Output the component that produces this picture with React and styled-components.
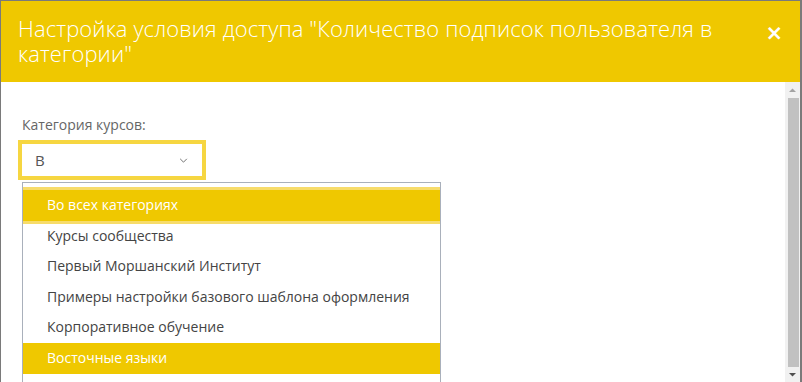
import React from "react";
import styled, { createGlobalStyle } from "styled-components";

const categories = [
  "Во всех категориях",
  "Курсы сообщества",
  "Первый Моршанский Институт",
  "Примеры настройки базового шаблона оформления",
  "Корпоративное обучение",
  "Восточные языки",
];

export default function App() {
  return (
    <>
      <GlobalStyle />
      <Page>
        <Modal>
          <Header>
            <Title>
              Настройка условия доступа "Количество подписок пользователя в
              категории"
            </Title>
            <Close>×</Close>
          </Header>
          <Body>
            <Content>
              <Label>Категория курсов:</Label>
              <Select>
                <SelectValue>В</SelectValue>
                <Chevron viewBox="0 0 10 6" width="9" height="5">
                  <path d="M1 1l4 4 4-4" fill="none" stroke="#666" strokeWidth="1.1" />
                </Chevron>
              </Select>
              <Dropdown>
                {categories.map((c, i) => (
                  <Option key={c} $active={i === 0 || i === 5} $focus={i === 0}>
                    {c}
                  </Option>
                ))}
                <Spacer />
              </Dropdown>
            </Content>
            <ScrollBar>
              <ScrollArrow viewBox="0 0 15 15">
                <polygon points="4,9 11,9 7.5,5.5" fill="#a3a3a3" />
              </ScrollArrow>
              <Thumb />
              <ScrollArrow viewBox="0 0 15 15">
                <polygon points="4,6 11,6 7.5,9.5" fill="#505050" />
              </ScrollArrow>
            </ScrollBar>
          </Body>
        </Modal>
      </Page>
    </>
  );
}

const GlobalStyle = createGlobalStyle`
  html, body {
    margin: 0;
    padding: 0;
    background: #7a7a7a;
    overflow: hidden;
  }
`;

const Page = styled.div`
  padding: 1px 2px 0 1px;
  height: 382px;
  box-sizing: border-box;
  font-family: "Open Sans", "Liberation Sans", sans-serif;
`;

const Modal = styled.div`
  position: relative;
  width: 799px;
  height: 381px;
  background: #ffffff;
  display: flex;
  flex-direction: column;
  overflow: hidden;
`;

const Header = styled.div`
  height: 81px;
  flex-shrink: 0;
  background: #efc800;
  display: flex;
  align-items: flex-start;
  justify-content: space-between;
  padding: 15px 17px 0 17px;
  box-sizing: border-box;
`;

const Title = styled.div`
  color: #ffffff;
  font-size: 22px;
  font-weight: 300;
  line-height: 25px;
  width: 710px;
  letter-spacing: 0.1px;
`;

const Close = styled.div`
  color: #ffffff;
  font-family: "DejaVu Sans", sans-serif;
  font-size: 21px;
  font-weight: 700;
  line-height: 22px;
  margin-top: 6px;
`;

const Body = styled.div`
  flex: 1;
  display: flex;
  min-height: 0;
  overflow: hidden;
`;

const Content = styled.div`
  flex: 1;
  padding: 33px 0 0 17px;
  box-sizing: border-box;
`;

const ScrollBar = styled.div`
  width: 15px;
  flex-shrink: 0;
  background: #f1f1f1;
  display: flex;
  flex-direction: column;
  padding-top: 1px;
`;

const ScrollArrow = styled.svg`
  display: block;
  width: 15px;
  height: 15px;
  flex-shrink: 0;
`;

const Thumb = styled.div`
  flex: 1;
  margin: 0 1px 0 3px;
  background: #c1c1c1;
`;

const Label = styled.div`
  color: #666666;
  font-size: 14px;
  line-height: 20px;
  padding-left: 4px;
`;

const Select = styled.div`
  margin-top: 5px;
  width: 188px;
  height: 40px;
  box-sizing: border-box;
  border: 4px solid #f6d641;
  display: flex;
  align-items: center;
  justify-content: space-between;
  padding: 0 14px 0 13px;
`;

const SelectValue = styled.span`
  color: #555555;
  font-size: 15px;
`;

const Chevron = styled.svg`
  display: block;
`;

const Dropdown = styled.div`
  position: absolute;
  margin: 2px 0 0 4px;
  width: 419px;
  box-sizing: border-box;
  border: 1px solid #a9b0bb;
  padding-top: 7px;
  background: #ffffff;
  overflow: hidden;
`;

const Option = styled.div`
  height: 30.6px;
  line-height: 30.6px;
  padding-left: 24px;
  font-size: 14px;
  color: ${(p) => (p.$active ? "#ffffff" : "#444444")};
  background: ${(p) => (p.$active ? "#efc800" : "transparent")};
  box-shadow: ${(p) => (p.$focus ? "0 0 0 3px #f7dc6a" : "none")};
  position: relative;
  white-space: nowrap;
`;

const Spacer = styled.div`
  height: 30px;
`;
